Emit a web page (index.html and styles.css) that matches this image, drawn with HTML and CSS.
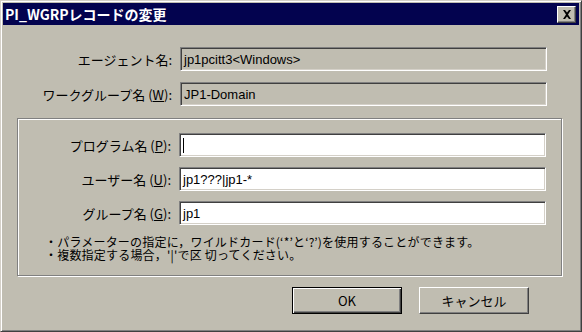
FILE: index.html
```html
<!DOCTYPE html>
<html>
	<head>
		<title>PI_WGRPレコードの変更</title>
		<link rel="stylesheet" href="styles.css">
	</head>
	<body>
		<div class="window">
			<div class="titlebar">
				<span class="title">PI_WGRPレコードの変更</span>
				<span class="close">
					<svg width="10" height="9" viewBox="0 0 10 9"><path d="M1 0h2l2 2.5 2-2.5h2l-3 4.5 3 4.5h-2l-2-2.5-2 2.5h-2l3-4.5z" fill="#000"/></svg>
				</span>
			</div>
			<div class="fields top">
				<label>エージェント名:</label>
				<div class="field disabled">jp1pcitt3&lt;Windows&gt;</div>
				<label>ワークグループ名 (<u>W</u>):</label>
				<div class="field disabled">JP1-Domain</div>
			</div>
			<fieldset class="group">
				<div class="fields">
					<label>プログラム名 (<u>P</u>):</label>
					<div class="field"><span class="caret"></span></div>
					<label>ユーザー名 (<u>U</u>):</label>
					<div class="field">jp1???|jp1-*</div>
					<label>グループ名 (<u>G</u>):</label>
					<div class="field">jp1</div>
				</div>
				<div class="notes">
					<p>・パラメーターの指定に，ワイルドカード(‘*’と‘?’)を使用することができます。</p>
					<p>・複数指定する場合，'|'で区 切ってください。</p>
				</div>
			</fieldset>
			<div class="buttons">
				<button class="button default">OK</button>
				<button class="button">キャンセル</button>
			</div>
		</div>
	</body>
</html>
```

FILE: styles.css
```css
body {
	margin: 0;
	padding: 0;
	overflow: hidden;
	background-color: #c0bdb1;
	font-family: "Noto Sans CJK JP", sans-serif;
	font-size: 13px;
	color: #000;
}
.window {
	box-sizing: border-box;
	width: 582px;
	height: 332px;
	padding: 1px;
	background-color: #c0bdb1;
	border-top: 1px solid #d4d0c8;
	border-left: 1px solid #d4d0c8;
	border-right: 1px solid #404040;
	border-bottom: 1px solid #404040;
	box-shadow: inset 1px 1px 0 #fff, inset -1px -1px 0 #808080;
}
.titlebar {
	display: flex;
	align-items: center;
	justify-content: space-between;
	height: 22px;
	margin: 1px 1px 0 1px;
	padding: 0 3px 0 2px;
	background-color: #03034f;
}
.title {
	color: #fff;
	font-weight: bold;
	font-size: 14px;
	line-height: 22px;
}
.close {
	display: flex;
	align-items: center;
	justify-content: center;
	box-sizing: border-box;
	width: 19px;
	height: 17px;
	background-color: #c0bdb1;
	border-top: 1px solid #fff;
	border-left: 1px solid #fff;
	border-right: 1px solid #404040;
	border-bottom: 1px solid #404040;
	box-shadow: inset -1px -1px 0 #808080;
}
.fields {
	display: grid;
	grid-template-columns: 170px 367px;
	grid-auto-rows: 24px;
	column-gap: 8px;
	row-gap: 11px;
	align-items: center;
}
.top {
	margin-top: 22px;
}
.fields label {
	text-align: right;
	white-space: nowrap;
}
.field {
	box-sizing: border-box;
	height: 24px;
	padding: 0 3px;
	display: flex;
	align-items: center;
	background-color: #fff;
	font-family: "Liberation Sans", "Noto Sans CJK JP", sans-serif;
	font-size: 13px;
	border-top: 1px solid #808080;
	border-left: 1px solid #808080;
	border-right: 1px solid #fff;
	border-bottom: 1px solid #fff;
	box-shadow: inset 1px 1px 0 #404040, inset -1px -1px 0 #d4d0c8;
}
.field.disabled {
	background-color: #c0bdb1;
}
.caret {
	width: 1px;
	height: 15px;
	background-color: #000;
}
.group {
	box-sizing: border-box;
	width: 545px;
	height: 158px;
	margin: 12px 0 0 15px;
	padding: 14px 0 0 0;
	border: 1px solid #808080;
	box-shadow: inset 1px 1px 0 #fff, 1px 1px 0 #fff;
}
.group .fields {
	grid-template-columns: 153px 367px;
	row-gap: 10px;
}
.notes {
	margin: 10px 0 0 27px;
	font-size: 12px;
	line-height: 13px;
	letter-spacing: 0.2px;
}
.notes p {
	margin: 0;
	white-space: nowrap;
}
.buttons {
	display: flex;
	justify-content: flex-end;
	gap: 17px;
	margin-top: 11px;
	padding-right: 51px;
}
.button {
	box-sizing: border-box;
	width: 110px;
	height: 27px;
	padding: 0;
	background-color: #c0bdb1;
	font-family: "Noto Sans CJK JP", sans-serif;
	font-size: 13px;
	color: #000;
	border-top: 1px solid #fff;
	border-left: 1px solid #fff;
	border-right: 1px solid #404040;
	border-bottom: 1px solid #404040;
	box-shadow: inset -1px -1px 0 #808080;
}
.button.default {
	border: 1px solid #000;
	box-shadow: inset 1px 1px 0 #fff, inset -1px -1px 0 #404040, inset -2px -2px 0 #808080;
}
```
